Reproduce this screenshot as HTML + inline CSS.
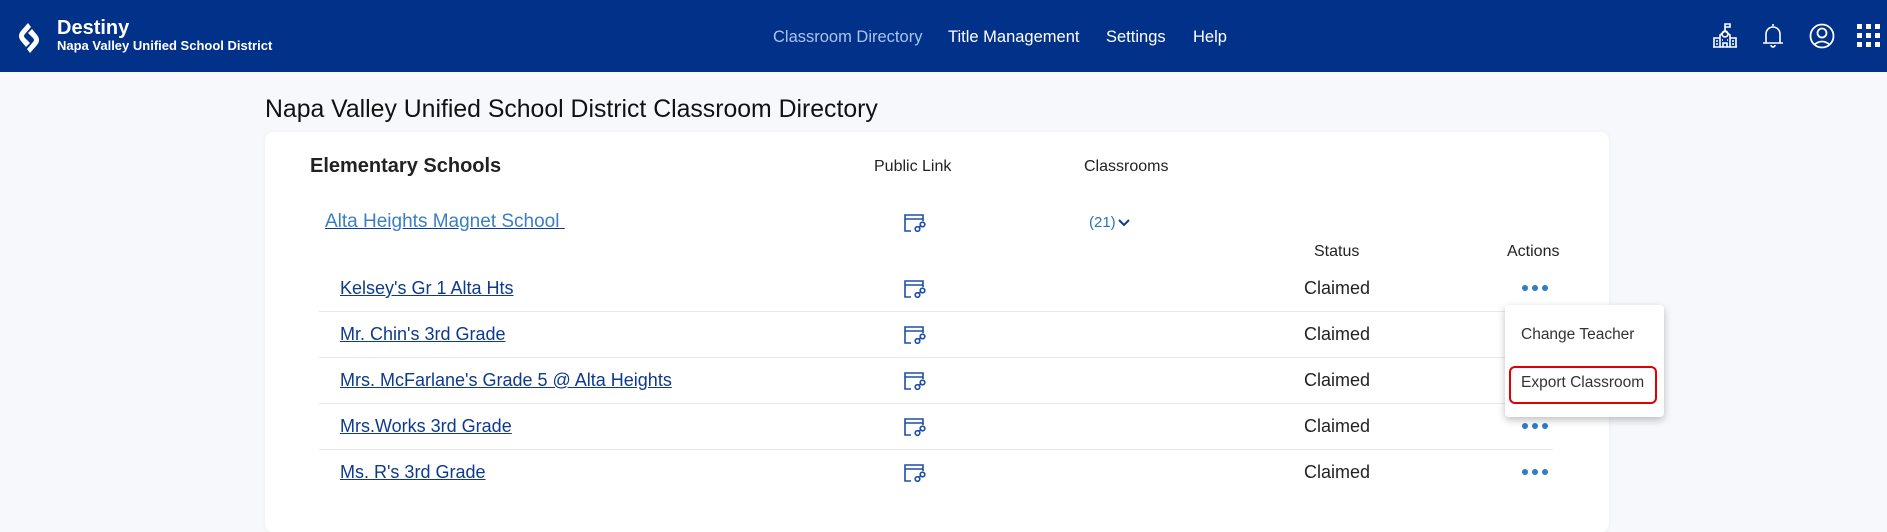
<!DOCTYPE html>
<html><head><meta charset="utf-8"><style>
*{margin:0;padding:0;box-sizing:border-box}
body{width:1887px;height:495px;overflow:hidden;background:#f7f8fc;font-family:"Liberation Sans",Arial,sans-serif;position:relative}
.a{position:absolute;white-space:nowrap}
.hdr{position:absolute;left:0;top:0;width:1887px;height:72px;background:#023189}
.nav{color:#fff;font-size:16.5px;top:28px}
.card{position:absolute;left:265px;top:132px;width:1344px;height:400px;background:#fff;border-radius:8px;box-shadow:0 0 4px rgba(0,0,0,.05)}
.lnk{color:#0d3a8e;text-decoration:underline;font-size:18px;left:340px}
.cl{font-size:18px;color:#222;left:1304px}
.sep{position:absolute;left:319px;width:1234px;height:1px;background:#e8e8e8}
.dots{position:absolute;left:1521px}
.th{font-size:16px;color:#222}
</style></head><body>
<div class="hdr"></div>
<svg class="a" style="left:16px;top:22px" width="26" height="32" viewBox="0 0 26 32"><path d="M12 1 L5 9 Q1 14 5 19 L10 25 L14 21 L9 16 Q7 14 9 12 L15 5 Z" fill="#fff"/><path d="M14 31 L21 23 Q25 18 21 13 L16 7 L12 11 L17 16 Q19 18 17 20 L11 27 Z" fill="#fff"/></svg>
<div class="a" style="left:57px;top:17px;color:#fff;font-size:20px;font-weight:bold">Destiny</div>
<div class="a" style="left:57px;top:38px;color:#fff;font-size:13px;font-weight:bold">Napa Valley Unified School District</div>
<div class="a nav" style="left:773px;color:#a9c4ee">Classroom Directory</div>
<div class="a nav" style="left:948px">Title Management</div>
<div class="a nav" style="left:1106px">Settings</div>
<div class="a nav" style="left:1193px">Help</div>
<svg class="a" style="left:1712px;top:22px" width="26" height="27" viewBox="0 0 26 27" fill="none" stroke="#fff" stroke-width="1.6"><path d="M13 9V2h5v3h-5"/><circle cx="13" cy="12" r="3"/><path d="M8 25V13l5-4 5 4v12M2 25V16h6M18 16h6v9M1 25h24M11 25v-4h4v4"/><path d="M4 19h2M4 22h2M20 19h2M20 22h2M10 18h1M15 18h1"/></svg>
<svg class="a" style="left:1762px;top:23px" width="22" height="26" viewBox="0 0 22 26" fill="none" stroke="#fff" stroke-width="1.6"><path d="M11 1v2M4 20V11a7 7 0 0 1 14 0v9M1 20h20M9 22a2 2 0 0 0 4 0"/></svg>
<svg class="a" style="left:1809px;top:23px" width="26" height="26" viewBox="0 0 26 26" fill="none" stroke="#fff" stroke-width="1.8"><circle cx="13" cy="13" r="11.5"/><circle cx="13" cy="10" r="4.5"/><path d="M5.5 21.5q7.5-6 15 0"/></svg>
<svg class="a" style="left:1857px;top:24px" width="24" height="24" viewBox="0 0 24 24" fill="#fff"><rect x="0" y="0" width="5" height="5"/><rect x="9" y="0" width="5" height="5"/><rect x="18" y="0" width="5" height="5"/><rect x="0" y="9" width="5" height="5"/><rect x="9" y="9" width="5" height="5"/><rect x="18" y="9" width="5" height="5"/><rect x="0" y="18" width="5" height="5"/><rect x="9" y="18" width="5" height="5"/><rect x="18" y="18" width="5" height="5"/></svg>
<div class="a" style="left:265px;top:96px;font-size:24.8px;color:#111">Napa Valley Unified School District Classroom Directory</div>
<div class="card"></div>
<div class="a" style="left:310px;top:155px;font-size:20px;color:#222;font-weight:bold">Elementary Schools</div>
<div class="a th" style="left:874px;top:158px">Public Link</div>
<div class="a th" style="left:1084px;top:158px">Classrooms</div>
<div class="a" style="left:325px;top:211px;font-size:19px;color:#3a7fc4;text-decoration:underline;text-decoration-color:#0d3a8e">Alta Heights Magnet School&nbsp;</div>
<div class="a" style="left:1089px;top:214px;font-size:15px;color:#2d72c0">(21)</div>
<svg class="a" style="left:1118px;top:219px" width="12" height="8" viewBox="0 0 12 8"><path d="M1 1l5 5 5-5" fill="none" stroke="#0d3a8e" stroke-width="2"/></svg>
<div class="a th" style="left:1314px;top:243px">Status</div>
<div class="a th" style="left:1507px;top:243px">Actions</div>

<svg width="0" height="0" style="position:absolute"><defs><symbol id="ic" viewBox="0 0 24 20"><path d="M8 18H2V2h18v6M2 6h18" fill="none" stroke="#1d4ea8" stroke-width="1.6"/><circle cx="14.5" cy="16" r="2.3" fill="none" stroke="#1d4ea8" stroke-width="1.6"/><circle cx="19.5" cy="11.5" r="2.3" fill="none" stroke="#1d4ea8" stroke-width="1.6"/><path d="M15.5 14.5l3-2" stroke="#1d4ea8" stroke-width="1.6"/></symbol>
<symbol id="dt" viewBox="0 0 28 8"><circle cx="4" cy="4" r="3" fill="#2f7bc6"/><circle cx="14" cy="4" r="3" fill="#2f7bc6"/><circle cx="24" cy="4" r="3" fill="#2f7bc6"/></symbol></defs></svg>

<svg class="a" style="left:903px;top:213px" width="24" height="20"><use href="#ic"/></svg>

<div class="a lnk" style="top:278px">Kelsey's Gr 1 Alta Hts</div>
<div class="a lnk" style="top:324px">Mr. Chin's 3rd Grade</div>
<div class="a lnk" style="top:370px">Mrs. McFarlane's Grade 5 @ Alta Heights</div>
<div class="a lnk" style="top:416px">Mrs.Works 3rd Grade</div>
<div class="a lnk" style="top:462px">Ms. R's 3rd Grade</div>

<svg class="a" style="left:903px;top:279px" width="24" height="20"><use href="#ic"/></svg>
<svg class="a" style="left:903px;top:325px" width="24" height="20"><use href="#ic"/></svg>
<svg class="a" style="left:903px;top:371px" width="24" height="20"><use href="#ic"/></svg>
<svg class="a" style="left:903px;top:417px" width="24" height="20"><use href="#ic"/></svg>
<svg class="a" style="left:903px;top:463px" width="24" height="20"><use href="#ic"/></svg>

<div class="a cl" style="top:278px">Claimed</div>
<div class="a cl" style="top:324px">Claimed</div>
<div class="a cl" style="top:370px">Claimed</div>
<div class="a cl" style="top:416px">Claimed</div>
<div class="a cl" style="top:462px">Claimed</div>

<div class="sep" style="top:311px"></div>
<div class="sep" style="top:357px"></div>
<div class="sep" style="top:403px"></div>
<div class="sep" style="top:449px"></div>

<svg class="dots" style="top:284px" width="28" height="8"><use href="#dt"/></svg>
<svg class="dots" style="top:422px" width="28" height="8"><use href="#dt"/></svg>
<svg class="dots" style="top:468px" width="28" height="8"><use href="#dt"/></svg>

<div class="a" style="left:1505px;top:305px;width:159px;height:112px;background:#fff;border-radius:4px;box-shadow:0 3px 8px rgba(0,0,0,.25)"></div>
<div class="a" style="left:1521px;top:326px;font-size:15.5px;color:#333">Change Teacher</div>
<div class="a" style="left:1509px;top:366px;width:148px;height:38px;border:2.5px solid #e00000;border-radius:6px"></div>
<div class="a" style="left:1521px;top:374px;font-size:15.5px;color:#333">Export Classroom</div>
</body></html>
